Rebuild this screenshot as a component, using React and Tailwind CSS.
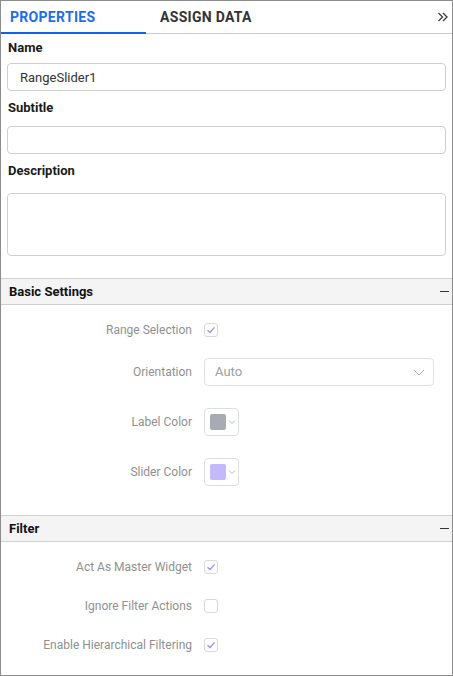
import { useState } from "react";

const font = { fontFamily: "Roboto, 'Noto Sans', sans-serif" };

function Check({ checked }) {
  return (
    <span className="flex h-[14px] w-[14px] items-center justify-center rounded-[3px] border border-[#d9d9d9] bg-white">
      {checked && (
        <svg width="10" height="10" viewBox="0 0 10 10">
          <polyline
            points="1.5,5.2 4,7.5 8.6,2.4"
            fill="none"
            stroke="#8b98f5"
            strokeWidth="1.3"
          />
        </svg>
      )}
    </span>
  );
}

function Row({ label, children, className = "" }) {
  return (
    <div className={`flex items-center ${className}`}>
      <div className="w-[191px] shrink-0 text-right text-[12px] text-[#909090]">
        {label}
      </div>
      <div className="ml-[12px] flex flex-1 items-center">{children}</div>
    </div>
  );
}

function Swatch({ color }) {
  return (
    <div className="flex h-[28px] w-[35px] items-center rounded-[4px] border border-[#dedede] bg-white pl-[5px]">
      <span
        className="h-[16px] w-[16px] rounded-[2px]"
        style={{ backgroundColor: color }}
      />
      <svg width="8" height="6" viewBox="0 0 8 6" className="ml-[2px]">
        <polyline points="1,1.5 4,4.5 7,1.5" fill="none" stroke="#b0b0b0" strokeWidth="0.9" />
      </svg>
    </div>
  );
}

function SectionHeader({ title }) {
  return (
    <div className="flex h-[27px] items-center justify-between border-y border-[#d0d0d0] bg-[#f4f4f4] pl-[8px] pr-[3px]">
      <span className="text-[13px] font-bold text-[#111]">{title}</span>
      <span className="h-[1.5px] w-[9px] bg-[#333]" />
    </div>
  );
}

export default function App() {
  const [name, setName] = useState("RangeSlider1");

  return (
    <div
      className="flex h-[676px] w-[453px] flex-col overflow-hidden border border-[#8c8c8c] bg-white"
      style={font}
    >
      {/* tabs */}
      <div className="relative flex h-[33px] shrink-0 items-center border-b border-[#cccccc]">
        <div className="relative flex h-full w-[145px] items-center pl-[9px]">
          <span className="text-[14px] font-bold tracking-[0.3px] text-[#1a6fe8]">
            PROPERTIES
          </span>
          <span className="absolute bottom-[-1px] left-0 h-[2px] w-full bg-[#0f62f0]" />
        </div>
        <div className="ml-[14px] text-[14px] font-bold tracking-[0.3px] text-[#333]">
          ASSIGN DATA
        </div>
        <div className="ml-auto mr-[3px] flex items-center">
          <svg width="12" height="12" viewBox="0 0 12 12">
            <polyline points="1.5,2 5.5,6 1.5,10" fill="none" stroke="#444" strokeWidth="1.4" />
            <polyline points="6,2 10,6 6,10" fill="none" stroke="#444" strokeWidth="1.4" />
          </svg>
        </div>
      </div>

      {/* general fields */}
      <div className="flex flex-col px-[6px] pt-[6px] pb-[22px]">
        <label className="pl-[1px] text-[13px] font-bold leading-[16px] text-[#1a1a1a]">
          Name
        </label>
        <input
          value={name}
          onChange={(e) => setName(e.target.value)}
          className="mt-[7px] h-[28px] rounded-[4px] border border-[#cfcfcf] px-[12px] text-[13px] text-[#333] outline-none"
        />
        <label className="mt-[9px] pl-[1px] text-[13px] font-bold leading-[16px] text-[#1a1a1a]">
          Subtitle
        </label>
        <input className="mt-[10px] h-[28px] rounded-[4px] border border-[#cfcfcf] px-[12px] text-[13px] outline-none" />
        <label className="mt-[9px] pl-[1px] text-[13px] font-bold leading-[16px] text-[#1a1a1a]">
          Description
        </label>
        <textarea className="mt-[14px] h-[63px] resize-none rounded-[4px] border border-[#cfcfcf] px-[12px] text-[13px] outline-none" />
      </div>

      <SectionHeader title="Basic Settings" />
      <div className="flex flex-col pt-[16px] pb-[29px]">
        <Row label="Range Selection">
          <Check checked />
        </Row>
        <Row label="Orientation" className="mt-[19px]">
          <div className="flex h-[28px] w-[230px] items-center justify-between rounded-[4px] border border-[#e0e0e0] pl-[10px] pr-[8px] text-[13px] text-[#a0a0a0]">
            Auto
            <svg width="12" height="7" viewBox="0 0 12 7">
              <polyline points="1,1 6,6 11,1" fill="none" stroke="#b3b3b3" strokeWidth="1" />
            </svg>
          </div>
        </Row>
        <Row label="Label Color" className="mt-[22px]">
          <Swatch color="#a6abb4" />
        </Row>
        <Row label="Slider Color" className="mt-[22px]">
          <Swatch color="#c4b9fb" />
        </Row>
      </div>

      <SectionHeader title="Filter" />
      <div className="flex flex-col pt-[16px]">
        <Row label="Act As Master Widget">
          <Check checked />
        </Row>
        <Row label="Ignore Filter Actions" className="mt-[21px]">
          <Check />
        </Row>
        <Row label="Enable Hierarchical Filtering" className="mt-[21px]">
          <Check checked />
        </Row>
      </div>
    </div>
  );
}
